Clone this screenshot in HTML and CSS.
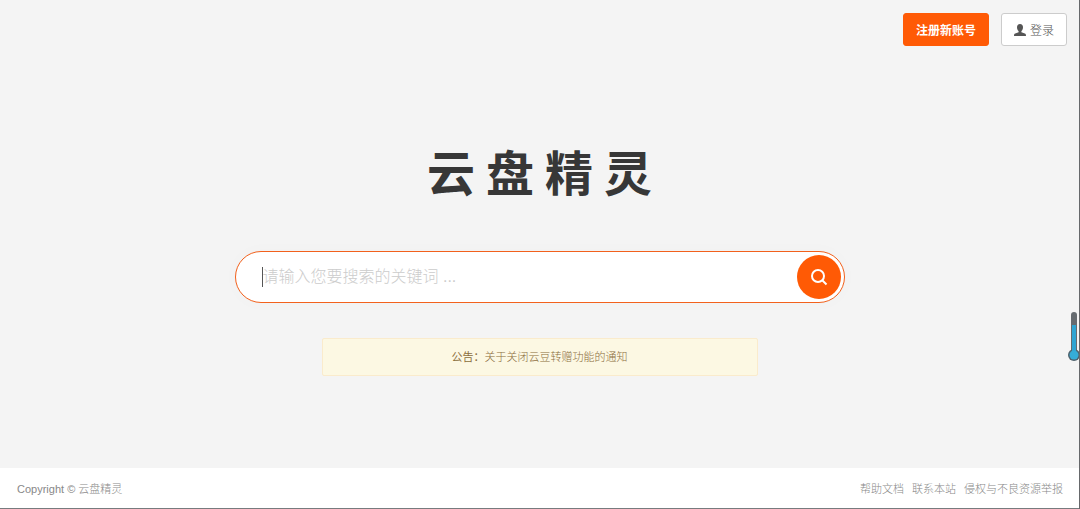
FILE: index.html
```
<!DOCTYPE html>
<html lang="zh-CN">
<head>
    <meta charset="UTF-8">
    <meta name="viewport" content="width=device-width, initial-scale=1.0">
    <title>云盘精灵</title>
    <link rel="stylesheet" href="styles.css">
</head>
<body>
    <header class="header">
        <button type="button" class="btn btn-primary">注册新账号</button>
        <button type="button" class="btn btn-default">
            <svg class="icon-user" viewBox="0 0 12 12" aria-hidden="true">
                <path d="M6 0C4 0 3 1.300 3 3.200C3 5 3.700 6.300 4.600 7V8.200L1.200 9.600C.3 10 0 10.600 0 12H12C12 10.600 11.700 10 10.800 9.600L7.400 8.200V7C8.300 6.300 9 5 9 3.200C9 1.300 8 0 6 0Z"/>
            </svg>
            登录
        </button>
    </header>

    <main class="main">
        <h1 class="logo"><span>云</span><span>盘</span><span>精</span><span>灵</span></h1>

        <form class="search">
            <span class="caret"></span>
            <input type="text" class="search-input" aria-label="搜索" placeholder="请输入您要搜索的关键词 ...">
            <button type="submit" class="search-btn" aria-label="搜索">
                <svg class="icon-search" viewBox="0 0 18 18" aria-hidden="true">
                    <circle cx="8" cy="8" r="6"/>
                    <path d="M12.500 12.500L16.500 16.500"/>
                </svg>
            </button>
        </form>

        <div class="notice"><strong>公告：</strong><a href="#">关于关闭云豆转赠功能的通知</a></div>
    </main>

    <svg class="thermo" viewBox="0 0 12 50" aria-hidden="true">
        <rect x="3" y="0" width="6" height="42" rx="3" fill="#666b70"/>
        <circle cx="6" cy="43" r="6" fill="#4e626d"/>
        <rect x="4" y="13" width="4" height="28" fill="#2fa4d2"/>
        <circle cx="6" cy="43" r="4.500" fill="#35add8"/>
    </svg>

    <footer class="footer">
        <span>Copyright © 云盘精灵</span>
        <nav class="links">
            <a href="#">帮助文档</a>
            <a href="#">联系本站</a>
            <a href="#">侵权与不良资源举报</a>
        </nav>
    </footer>
</body>
</html>
```
FILE: styles.css
```
* {
    box-sizing: border-box;
}
body {
    position: relative;
    display: flex;
    flex-direction: column;
    min-height: 100vh;
    margin: 0;
    background: #f4f4f4;
    border-right: 1px solid #66686b;
    font-family: "Liberation Sans", "Noto Sans CJK SC", sans-serif;
    font-size: 11px;
    font-weight: 300;
}
a {
    color: inherit;
    text-decoration: none;
}
.header {
    display: flex;
    justify-content: flex-end;
    gap: 12px;
    padding: 13px 12px 0;
}
.btn {
    display: flex;
    align-items: center;
    gap: 4px;
    height: 33px;
    padding: 0 12px;
    border: 1px solid #ccc;
    border-radius: 3px;
    font-family: inherit;
    font-size: 12px;
    cursor: pointer;
}
.btn-primary {
    background: #ff5a05;
    border-color: #ff5a05;
    color: #fff;
    font-weight: bold;
}
.btn-default {
    background: #fff;
    color: #555;
    font-weight: 300;
}
.icon-user {
    width: 12px;
    height: 12px;
    fill: #555;
}
.main {
    flex: 1;
    display: flex;
    flex-direction: column;
    align-items: center;
    padding: 101px 20px 0;
}
.logo {
    display: flex;
    gap: 11px;
    margin: 0;
    color: #373737;
    font-size: 48px;
    font-weight: 700;
    line-height: 56px;
}
.search {
    display: flex;
    align-items: center;
    width: 100%;
    max-width: 610px;
    height: 52px;
    margin-top: 48px;
    padding: 0 3px 0 26px;
    background: #fff;
    border: 1px solid #f2611c;
    border-radius: 26px;
    box-shadow: 0 0 18px rgba(0, 0, 0, 0.02);
}
.caret {
    width: 1px;
    height: 20px;
    background: #555;
}
.search-input {
    flex: 1;
    min-width: 0;
    padding: 0;
    border: none;
    outline: none;
    background: none;
    font-family: inherit;
    font-size: 16px;
    font-weight: 300;
}
.search-input::placeholder {
    color: #ccc;
}
.search-btn {
    display: flex;
    align-items: center;
    justify-content: center;
    width: 44px;
    height: 44px;
    padding: 0;
    border: none;
    border-radius: 50%;
    background: #ff5a05;
    cursor: pointer;
}
.icon-search {
    width: 18px;
    height: 18px;
    fill: none;
    stroke: #fff;
    stroke-width: 2;
}
.notice {
    display: flex;
    justify-content: center;
    width: 100%;
    max-width: 436px;
    margin-top: 35px;
    padding: 10px;
    background: #fcf8e3;
    border: 1px solid #faebcc;
    border-radius: 2px;
    color: #8a6d3b;
    line-height: 16px;
}
.thermo {
    position: absolute;
    top: 312px;
    right: -1px;
    width: 12px;
    height: 50px;
}
.footer {
    display: flex;
    justify-content: space-between;
    padding: 13px 16px 11px 17px;
    background: #fff;
    border-bottom: 1px solid #777b7e;
    color: #888;
    line-height: 16px;
}
.links {
    display: flex;
    gap: 8px;
}
```
